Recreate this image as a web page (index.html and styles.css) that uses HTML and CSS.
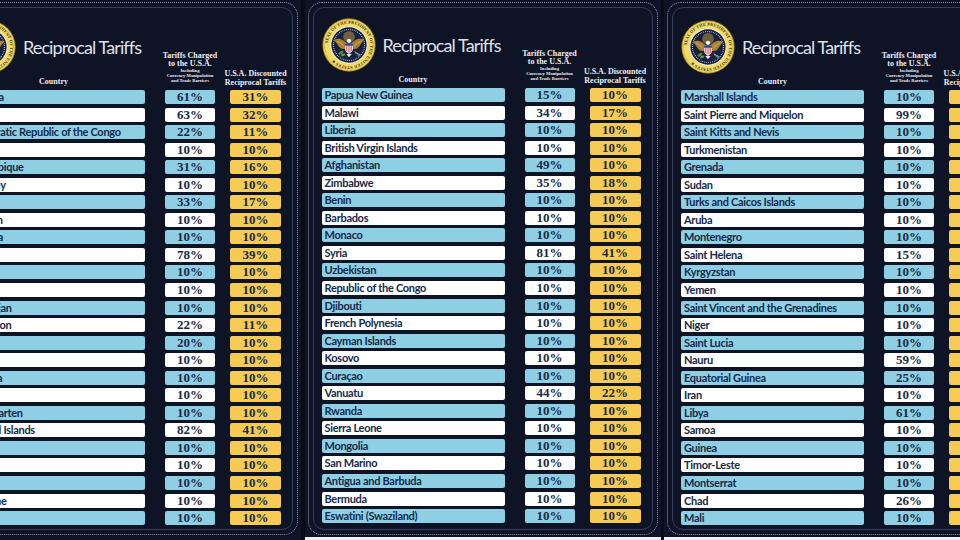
FILE: index.html
```html
<!DOCTYPE html>
<html lang="en">
<head>
<meta charset="utf-8">
<title>Reciprocal Tariffs</title>
<link rel="stylesheet" href="styles.css">
</head>
<body>
<svg class="defs" width="0" height="0" aria-hidden="true">
  <defs>
    <path id="sealring" d="M30,30 m-23.6,0 a23.6,23.6 0 1,1 47.2,0 a23.6,23.6 0 1,1 -47.2,0"/>
    <symbol id="seal" viewBox="0 0 60 60">
      <circle cx="30" cy="30" r="29.6" fill="#9c7f1f"/>
      <circle cx="30" cy="30" r="28.6" fill="#f1db66"/>
      <circle cx="30" cy="30" r="27.2" fill="none" stroke="#c9ab38" stroke-width="0.6"/>
      <text font-family="Liberation Serif, serif" font-weight="700" font-size="4.6" fill="#2b2a2a" letter-spacing="0.25"><textPath href="#sealring" startOffset="2">SEAL OF THE PRESIDENT OF THE UNITED STATES ★</textPath></text>
      <circle cx="30" cy="30" r="20.6" fill="#f4f4f4"/>
      <circle cx="30" cy="30" r="19.6" fill="#18213f"/>
      <circle cx="30" cy="30" r="17.2" fill="none" stroke="#e6e8f0" stroke-width="1.3" stroke-dasharray="0.8 1.35"/>
      <circle cx="30" cy="21" r="6.5" fill="#b8953a" opacity="0.55"/>
      <path d="M30 31 C25 24 18 21 13.5 24.5 C16 27 17.5 31 21 34 C24 35 27 34 30 33 Z" fill="#a9802f"/>
      <path d="M30 31 C35 24 42 21 46.5 24.5 C44 27 42.5 31 39 34 C36 35 33 34 30 33 Z" fill="#a9802f"/>
      <path d="M17 26 C20 27 22 29 24 31 M43 26 C40 27 38 29 36 31" stroke="#e1c06a" stroke-width="0.8" fill="none"/>
      <circle cx="30" cy="25.4" r="2.4" fill="#f5f3ec"/>
      <path d="M25.6 28.5 h8.8 v6 c0 3.4 -4.4 5.4 -4.4 5.4 c0 0 -4.4 -2 -4.4 -5.4 Z" fill="#f7f7f7"/>
      <rect x="25.6" y="28.5" width="8.8" height="2.4" fill="#2b4a9a"/>
      <path d="M27 31 v6 M29 31 v7.5 M31 31 v7.5 M33 31 v6" stroke="#c8343a" stroke-width="0.9"/>
      <path d="M27 40 l3 3.5 l3 -3.5 Z" fill="#efefe8"/>
      <ellipse cx="21" cy="38.5" rx="3.2" ry="1.6" fill="#4f8f3a" transform="rotate(-30 21 38.5)"/>
      <ellipse cx="23.5" cy="41" rx="2.4" ry="1.3" fill="#5fa446" transform="rotate(-20 23.5 41)"/>
      <path d="M36 37 l6 4 M37 39 l5 3.5 M36.5 38 l6.5 3" stroke="#c9c9c0" stroke-width="0.6"/>
    </symbol>
  </defs>
</svg>

<main class="board">

  <!-- Left panel -->
  <section class="panel panel--low panel--left">
    <div class="frame">
      <div class="inner">
        <header class="head">
          <div class="head-country">
            <div class="brand">
              <svg class="seal"><use href="#seal"/></svg>
              <h1 class="title">Reciprocal Tariffs</h1>
            </div>
            <div class="label">Country</div>
          </div>
          <div class="head-t">
            <span class="hl">Tariffs Charged</span>
            <span class="hl">to the U.S.A.</span>
            <span class="hs">Including</span>
            <span class="hs">Currency Manipulation</span>
            <span class="hs">and Trade Barriers</span>
          </div>
          <div class="head-d">
            <span class="hl2">U.S.A. Discounted</span>
            <span class="hl2">Reciprocal Tariffs</span>
          </div>
        </header>
        <div class="rows">
          <div class="row"><div class="c">Moldova</div><div class="t">61%</div><div class="d">31%</div></div>
          <div class="row"><div class="c">Angola</div><div class="t">63%</div><div class="d">32%</div></div>
          <div class="row"><div class="c">Democratic Republic of the Congo</div><div class="t">22%</div><div class="d">11%</div></div>
          <div class="row"><div class="c">Nepal</div><div class="t">10%</div><div class="d">10%</div></div>
          <div class="row"><div class="c">Mozambique</div><div class="t">31%</div><div class="d">16%</div></div>
          <div class="row"><div class="c">Paraguay</div><div class="t">10%</div><div class="d">10%</div></div>
          <div class="row"><div class="c">Zambia</div><div class="t">33%</div><div class="d">17%</div></div>
          <div class="row"><div class="c">Lebanon</div><div class="t">10%</div><div class="d">10%</div></div>
          <div class="row"><div class="c">Tanzania</div><div class="t">10%</div><div class="d">10%</div></div>
          <div class="row"><div class="c">Iraq</div><div class="t">78%</div><div class="d">39%</div></div>
          <div class="row"><div class="c">Georgia</div><div class="t">10%</div><div class="d">10%</div></div>
          <div class="row"><div class="c">Senegal</div><div class="t">10%</div><div class="d">10%</div></div>
          <div class="row"><div class="c">Azerbaijan</div><div class="t">10%</div><div class="d">10%</div></div>
          <div class="row"><div class="c">Cameroon</div><div class="t">22%</div><div class="d">11%</div></div>
          <div class="row"><div class="c">Uganda</div><div class="t">20%</div><div class="d">10%</div></div>
          <div class="row"><div class="c">Albania</div><div class="t">10%</div><div class="d">10%</div></div>
          <div class="row"><div class="c">Armenia</div><div class="t">10%</div><div class="d">10%</div></div>
          <div class="row"><div class="c">Gabon</div><div class="t">10%</div><div class="d">10%</div></div>
          <div class="row"><div class="c">Sint Maarten</div><div class="t">10%</div><div class="d">10%</div></div>
          <div class="row"><div class="c">Falkland Islands</div><div class="t">82%</div><div class="d">41%</div></div>
          <div class="row"><div class="c">Kuwait</div><div class="t">10%</div><div class="d">10%</div></div>
          <div class="row"><div class="c">Togo</div><div class="t">10%</div><div class="d">10%</div></div>
          <div class="row"><div class="c">Belize</div><div class="t">10%</div><div class="d">10%</div></div>
          <div class="row"><div class="c">Suriname</div><div class="t">10%</div><div class="d">10%</div></div>
          <div class="row"><div class="c">Bhutan</div><div class="t">10%</div><div class="d">10%</div></div>
        </div>
      </div>
    </div>
  </section>

  <!-- Middle panel -->
  <section class="panel panel--cut">
    <div class="frame">
      <div class="inner">
        <header class="head">
          <div class="head-country">
            <div class="brand">
              <svg class="seal"><use href="#seal"/></svg>
              <h1 class="title">Reciprocal Tariffs</h1>
            </div>
            <div class="label">Country</div>
          </div>
          <div class="head-t">
            <span class="hl">Tariffs Charged</span>
            <span class="hl">to the U.S.A.</span>
            <span class="hs">Including</span>
            <span class="hs">Currency Manipulation</span>
            <span class="hs">and Trade Barriers</span>
          </div>
          <div class="head-d">
            <span class="hl2">U.S.A. Discounted</span>
            <span class="hl2">Reciprocal Tariffs</span>
          </div>
        </header>
        <div class="rows">
          <div class="row"><div class="c">Papua New Guinea</div><div class="t">15%</div><div class="d">10%</div></div>
          <div class="row"><div class="c">Malawi</div><div class="t">34%</div><div class="d">17%</div></div>
          <div class="row"><div class="c">Liberia</div><div class="t">10%</div><div class="d">10%</div></div>
          <div class="row"><div class="c">British Virgin Islands</div><div class="t">10%</div><div class="d">10%</div></div>
          <div class="row"><div class="c">Afghanistan</div><div class="t">49%</div><div class="d">10%</div></div>
          <div class="row"><div class="c">Zimbabwe</div><div class="t">35%</div><div class="d">18%</div></div>
          <div class="row"><div class="c">Benin</div><div class="t">10%</div><div class="d">10%</div></div>
          <div class="row"><div class="c">Barbados</div><div class="t">10%</div><div class="d">10%</div></div>
          <div class="row"><div class="c">Monaco</div><div class="t">10%</div><div class="d">10%</div></div>
          <div class="row"><div class="c">Syria</div><div class="t">81%</div><div class="d">41%</div></div>
          <div class="row"><div class="c">Uzbekistan</div><div class="t">10%</div><div class="d">10%</div></div>
          <div class="row"><div class="c">Republic of the Congo</div><div class="t">10%</div><div class="d">10%</div></div>
          <div class="row"><div class="c">Djibouti</div><div class="t">10%</div><div class="d">10%</div></div>
          <div class="row"><div class="c">French Polynesia</div><div class="t">10%</div><div class="d">10%</div></div>
          <div class="row"><div class="c">Cayman Islands</div><div class="t">10%</div><div class="d">10%</div></div>
          <div class="row"><div class="c">Kosovo</div><div class="t">10%</div><div class="d">10%</div></div>
          <div class="row"><div class="c">Curaçao</div><div class="t">10%</div><div class="d">10%</div></div>
          <div class="row"><div class="c">Vanuatu</div><div class="t">44%</div><div class="d">22%</div></div>
          <div class="row"><div class="c">Rwanda</div><div class="t">10%</div><div class="d">10%</div></div>
          <div class="row"><div class="c">Sierra Leone</div><div class="t">10%</div><div class="d">10%</div></div>
          <div class="row"><div class="c">Mongolia</div><div class="t">10%</div><div class="d">10%</div></div>
          <div class="row"><div class="c">San Marino</div><div class="t">10%</div><div class="d">10%</div></div>
          <div class="row"><div class="c">Antigua and Barbuda</div><div class="t">10%</div><div class="d">10%</div></div>
          <div class="row"><div class="c">Bermuda</div><div class="t">10%</div><div class="d">10%</div></div>
          <div class="row"><div class="c">Eswatini (Swaziland)</div><div class="t">10%</div><div class="d">10%</div></div>
        </div>
      </div>
    </div>
  </section>

  <!-- Right panel -->
  <section class="panel panel--low panel--cut">
    <div class="frame">
      <div class="inner">
        <header class="head">
          <div class="head-country">
            <div class="brand">
              <svg class="seal"><use href="#seal"/></svg>
              <h1 class="title">Reciprocal Tariffs</h1>
            </div>
            <div class="label">Country</div>
          </div>
          <div class="head-t">
            <span class="hl">Tariffs Charged</span>
            <span class="hl">to the U.S.A.</span>
            <span class="hs">Including</span>
            <span class="hs">Currency Manipulation</span>
            <span class="hs">and Trade Barriers</span>
          </div>
          <div class="head-d">
            <span class="hl2">U.S.A. Discounted</span>
            <span class="hl2">Reciprocal Tariffs</span>
          </div>
        </header>
        <div class="rows">
          <div class="row"><div class="c">Marshall Islands</div><div class="t">10%</div><div class="d">10%</div></div>
          <div class="row"><div class="c">Saint Pierre and Miquelon</div><div class="t">99%</div><div class="d">50%</div></div>
          <div class="row"><div class="c">Saint Kitts and Nevis</div><div class="t">10%</div><div class="d">10%</div></div>
          <div class="row"><div class="c">Turkmenistan</div><div class="t">10%</div><div class="d">10%</div></div>
          <div class="row"><div class="c">Grenada</div><div class="t">10%</div><div class="d">10%</div></div>
          <div class="row"><div class="c">Sudan</div><div class="t">10%</div><div class="d">10%</div></div>
          <div class="row"><div class="c">Turks and Caicos Islands</div><div class="t">10%</div><div class="d">10%</div></div>
          <div class="row"><div class="c">Aruba</div><div class="t">10%</div><div class="d">10%</div></div>
          <div class="row"><div class="c">Montenegro</div><div class="t">10%</div><div class="d">10%</div></div>
          <div class="row"><div class="c">Saint Helena</div><div class="t">15%</div><div class="d">10%</div></div>
          <div class="row"><div class="c">Kyrgyzstan</div><div class="t">10%</div><div class="d">10%</div></div>
          <div class="row"><div class="c">Yemen</div><div class="t">10%</div><div class="d">10%</div></div>
          <div class="row"><div class="c">Saint Vincent and the Grenadines</div><div class="t">10%</div><div class="d">10%</div></div>
          <div class="row"><div class="c">Niger</div><div class="t">10%</div><div class="d">10%</div></div>
          <div class="row"><div class="c">Saint Lucia</div><div class="t">10%</div><div class="d">10%</div></div>
          <div class="row"><div class="c">Nauru</div><div class="t">59%</div><div class="d">30%</div></div>
          <div class="row"><div class="c">Equatorial Guinea</div><div class="t">25%</div><div class="d">13%</div></div>
          <div class="row"><div class="c">Iran</div><div class="t">10%</div><div class="d">10%</div></div>
          <div class="row"><div class="c">Libya</div><div class="t">61%</div><div class="d">31%</div></div>
          <div class="row"><div class="c">Samoa</div><div class="t">10%</div><div class="d">10%</div></div>
          <div class="row"><div class="c">Guinea</div><div class="t">10%</div><div class="d">10%</div></div>
          <div class="row"><div class="c">Timor-Leste</div><div class="t">10%</div><div class="d">10%</div></div>
          <div class="row"><div class="c">Montserrat</div><div class="t">10%</div><div class="d">10%</div></div>
          <div class="row"><div class="c">Chad</div><div class="t">26%</div><div class="d">13%</div></div>
          <div class="row"><div class="c">Mali</div><div class="t">10%</div><div class="d">10%</div></div>
        </div>
      </div>
    </div>
  </section>

</main>
</body>
</html>
```

FILE: styles.css
```css
* { box-sizing: border-box; }

html, body {
  margin: 0;
  padding: 0;
}

body {
  width: 960px;
  height: 540px;
  overflow: hidden;
  background: #080b16;
  font-family: "Lato", "Liberation Sans", sans-serif;
}

.defs {
  position: absolute;
  width: 0;
  height: 0;
}

.board {
  display: flex;
  gap: 3.5px;
  margin-left: -55px;
  height: 540px;
}

.panel {
  flex: 0 0 355px;
  height: 540px;
  background: #0e1325;
  padding: 2px 3px 0 3px;
}

.panel--cut {
  border-bottom: 3px solid #eef0f4;
}

.frame {
  height: 533px;
  border: 1px dotted #8e98ae;
  border-radius: 14px;
  padding: 4px;
}

.inner {
  height: 100%;
  border: 1px solid #343e58;
  border-radius: 11px;
  padding: 10px 11px 0 8px;
}

.panel--low .inner {
  padding-top: 12px;
}

/* Header */
.head {
  display: flex;
  align-items: flex-end;
  height: 70px;
}

.head-country {
  width: 183px;
  height: 100%;
  display: flex;
  flex-direction: column;
  justify-content: space-between;
  padding-bottom: 4px;
}

.brand {
  display: flex;
  align-items: center;
  gap: 7px;
  height: 54px;
}

.seal {
  width: 54px;
  height: 54px;
  flex: 0 0 54px;
}

.title {
  margin: 0;
  font-family: "Lato", sans-serif;
  font-weight: 400;
  font-size: 18px;
  letter-spacing: -0.9px;
  color: #dde1e8;
  white-space: nowrap;
  padding-bottom: 1px;
}

.label {
  text-align: center;
  font-family: "Liberation Serif", serif;
  font-weight: 700;
  font-size: 8px;
  line-height: 9px;
  color: #eceef3;
}

.head-t {
  width: 50px;
  margin-left: 20px;
  display: flex;
  flex-direction: column;
  align-items: center;
  padding-bottom: 7px;
  font-family: "Liberation Serif", serif;
  font-weight: 700;
  color: #eceef3;
}

.hl {
  font-size: 8px;
  line-height: 8px;
  white-space: nowrap;
}

.hs {
  font-size: 4.6px;
  line-height: 5px;
  white-space: nowrap;
}

.head-d {
  width: 51px;
  margin-left: 15px;
  display: flex;
  flex-direction: column;
  align-items: center;
  padding-bottom: 3.5px;
  font-family: "Liberation Serif", serif;
  font-weight: 700;
  color: #eceef3;
}

.hl2 {
  font-size: 8px;
  line-height: 9px;
  white-space: nowrap;
}

/* Rows */
.rows {
  display: flex;
  flex-direction: column;
  gap: 3.55px;
}

.row {
  display: flex;
  height: 14px;
}

.c {
  width: 183px;
  flex: 0 0 183px;
  border-radius: 2px;
  padding-left: 3px;
  font-family: "Lato", sans-serif;
  font-weight: 700;
  font-size: 11px;
  line-height: 14px;
  letter-spacing: -0.3px;
  color: #15294a;
  white-space: nowrap;
  overflow: hidden;
}

.panel--left .c {
  text-indent: -2px;
}

.t,
.d {
  border-radius: 2px;
  text-align: center;
  font-family: "Liberation Serif", serif;
  font-weight: 700;
  font-size: 13px;
  line-height: 14px;
  color: #1a2a45;
}

.t {
  width: 50px;
  flex: 0 0 50px;
  margin-left: 20px;
}

.d {
  width: 51px;
  flex: 0 0 51px;
  margin-left: 15px;
  background: #f5cb56;
}

.row:nth-child(odd) .c,
.row:nth-child(odd) .t {
  background: #8fcfe4;
}

.row:nth-child(even) .c,
.row:nth-child(even) .t {
  background: #ffffff;
}
```
